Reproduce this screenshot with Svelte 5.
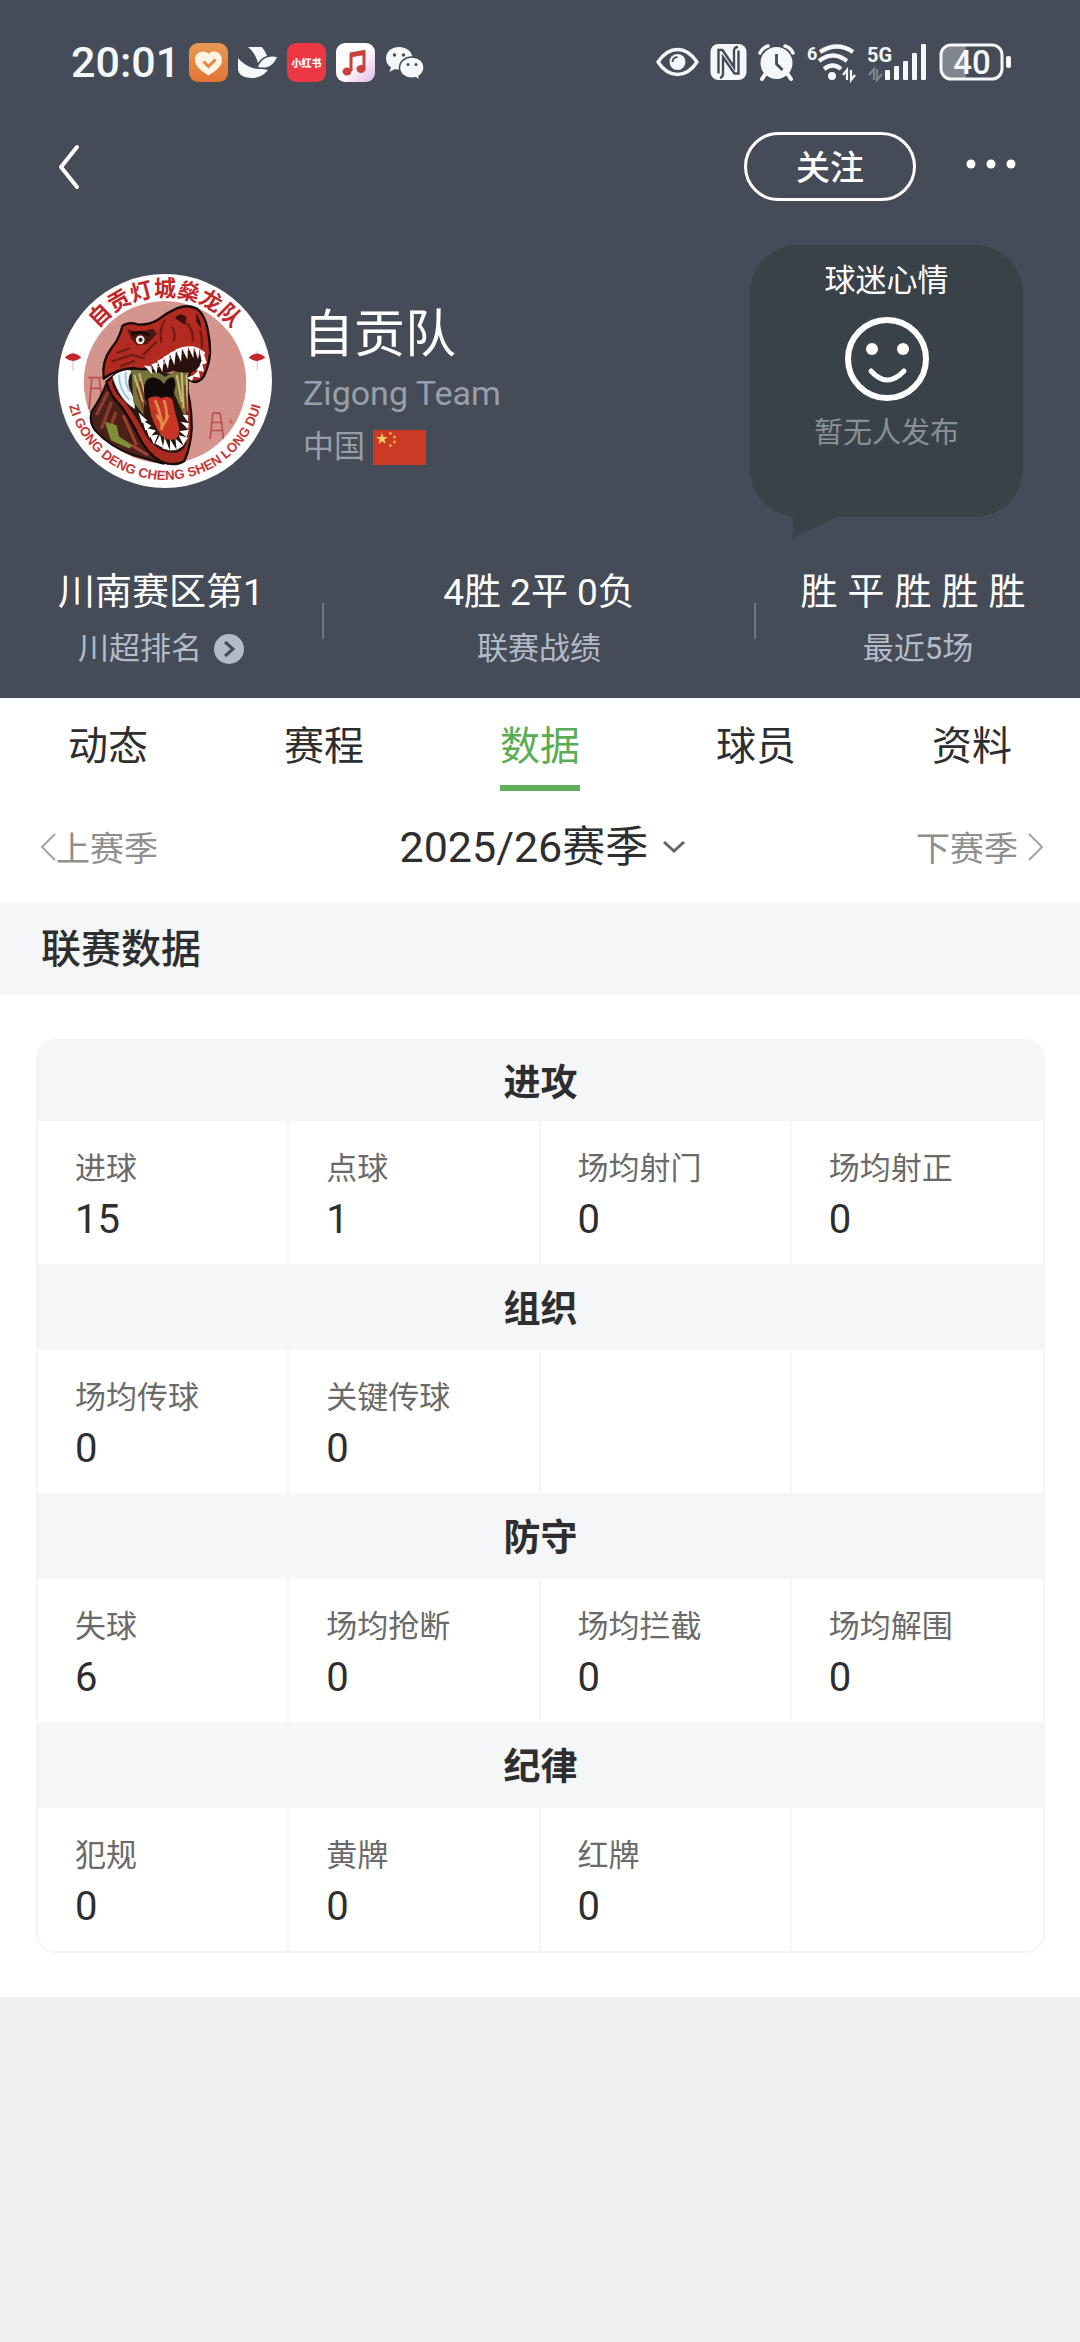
<script lang="ts">
  type Stat = { label: string; value: number };
  type Group = { title: string; stats: Stat[] };

  const tabs = ['动态', '赛程', '数据', '球员', '资料'];
  let active = $state('数据');
  let season = $state('2025/26赛季');

  const recent = ['胜', '平', '胜', '胜', '胜'];

  const groups: Group[] = [
    {
      title: '进攻',
      stats: [
        { label: '进球', value: 15 },
        { label: '点球', value: 1 },
        { label: '场均射门', value: 0 },
        { label: '场均射正', value: 0 }
      ]
    },
    {
      title: '组织',
      stats: [
        { label: '场均传球', value: 0 },
        { label: '关键传球', value: 0 }
      ]
    },
    {
      title: '防守',
      stats: [
        { label: '失球', value: 6 },
        { label: '场均抢断', value: 0 },
        { label: '场均拦截', value: 0 },
        { label: '场均解围', value: 0 }
      ]
    },
    {
      title: '纪律',
      stats: [
        { label: '犯规', value: 0 },
        { label: '黄牌', value: 0 },
        { label: '红牌', value: 0 }
      ]
    }
  ];

  const cols = [0, 1, 2, 3];
</script>

<header class="hero">
  <div class="status">
    <div class="status-left">
      <span class="time">20:01</span>
      <svg width="39" height="39" viewBox="0 0 39 39">
        <defs>
          <linearGradient id="orange" x1="0" y1="0" x2="0" y2="1">
            <stop offset="0" stop-color="#e99a52" />
            <stop offset="1" stop-color="#e27434" />
          </linearGradient>
        </defs>
        <rect width="39" height="39" rx="9" fill="url(#orange)" />
        <path d="M19.500 11C16 6.500 6 8 6 17c0 7 8 12 13.500 15.500C25 29 33 24 33 17c0-9-10-10.500-13.500-6z" fill="#fff3e2" />
        <path d="M14.500 18.500l5 5 7-7" fill="none" stroke="#e38542" stroke-width="3" />
      </svg>
      <svg width="39" height="39" viewBox="0 0 39 39" fill="#f4f8fb">
        <path d="M10 4h14c2 3 4 6 5 9-4 1-7 4-9 7-2-7-5-12-10-16z" />
        <path d="M0 15c6 7 14 11 21 11 3 0 6 0 9 1-4 5-9 8-16 8C5 35 0 31 0 26z" />
        <path d="M39 14c-9-2-16 2-19 10 9 2 15-1 19-10z" />
      </svg>
      <svg width="39" height="39" viewBox="0 0 39 39">
        <rect width="39" height="39" rx="9" fill="#ec3844" />
        <text class="app-name" x="19.500" y="24" text-anchor="middle">小红书</text>
      </svg>
      <svg width="39" height="39" viewBox="0 0 39 39">
        <defs>
          <linearGradient id="music" x1="0" y1="0" x2="1" y2="1">
            <stop offset="0.500" stop-color="#fffdfd" />
            <stop offset="1" stop-color="#e3b6ea" />
          </linearGradient>
        </defs>
        <rect width="39" height="39" rx="9" fill="url(#music)" />
        <path d="M14 11l14-2.500v17M15 11v17M14 13l14-2.500" fill="none" stroke="#c8413c" stroke-width="3" />
        <ellipse cx="11" cy="28.500" rx="4.500" ry="4" fill="#c8413c" />
        <ellipse cx="25" cy="26" rx="4.500" ry="4" fill="#c8413c" />
      </svg>
      <svg width="39" height="39" viewBox="0 0 39 39">
        <path d="M14 4C6 4 1 9 1 15.500c0 4 2 7 5 9L4.500 29l5.500-3c1.300.4 2.700.6 4 .6 7 0 13.500-5 13.500-11.300S22 4 14 4z" fill="#f4f8fb" />
        <path d="M27 14c-7 0-12.500 4.600-12.500 10.700S20 35.300 27 35.300c1.300 0 2.500-.2 3.700-.5l4.500 2.500-1.200-4c2.800-2 5-4.900 5-8.600C39 18.600 34 14 27 14z" fill="#f4f8fb" stroke="#454c57" stroke-width="1.500" />
        <g fill="#454c57">
          <circle cx="9.500" cy="12" r="1.700" />
          <circle cx="18.500" cy="12" r="1.700" />
          <circle cx="23" cy="21.500" r="1.500" />
          <circle cx="31" cy="21.500" r="1.500" />
        </g>
      </svg>
    </div>

    <div class="status-right">
      <svg width="43" height="38" viewBox="0 0 43 38">
        <path d="M2 19C8 10 14 6.500 21.500 6.500S35 10 41 19C35 28 29 31.500 21.500 31.500S8 28 2 19z" fill="none" stroke="#f4f8fb" stroke-width="3.500" stroke-linejoin="round" />
        <circle cx="21.500" cy="19" r="8" fill="#f4f8fb" />
        <path d="M16.500 19a5 5 0 0 1 5-5" fill="none" stroke="#454c57" stroke-width="2" />
      </svg>
      <svg width="37" height="38" viewBox="0 0 37 38">
        <rect x="0.500" y="1" width="36" height="36" rx="8" fill="#f4f8fb" />
        <path d="M8.500 30.500V7h4l11.500 17V8q0-4 4-4M28.500 7.500v23h-4L13 14v17q0 3-3 4" fill="none" stroke="#454c57" stroke-width="2.400" />
      </svg>
      <svg width="37" height="38" viewBox="0 0 37 38">
        <path d="M8 30l-4 6M29 30l4 6" stroke="#f4f8fb" stroke-width="4" stroke-linecap="round" />
        <circle cx="18.500" cy="20" r="16" fill="#f4f8fb" />
        <path d="M2 10a12 12 0 0 1 8-7M35 10a12 12 0 0 0-8-7" fill="none" stroke="#f4f8fb" stroke-width="3.500" stroke-linecap="round" />
        <path d="M18.500 11v10l6 6" fill="none" stroke="#454c57" stroke-width="2.800" />
      </svg>
      <svg width="50" height="38" viewBox="0 0 50 38">
        <text class="tiny" x="1" y="17">6</text>
        <g fill="none" stroke="#f4f8fb" stroke-width="4.200">
          <path d="M14 9q17-11 33 0" />
          <path d="M13 18q14-11 28 0" />
          <path d="M18 26q9-7 17 0" />
        </g>
        <circle cx="26" cy="33" r="4" fill="#f4f8fb" />
        <path d="M37 32l4-5v10M45 27v10l4-5" fill="none" stroke="#f4f8fb" stroke-width="2.200" />
      </svg>
      <svg width="61" height="38" viewBox="0 0 61 38">
        <text class="tiny wide" x="0" y="19">5G</text>
        <path d="M2 32l5-6v11M10 26v11l5-6" fill="none" stroke="#7d838b" stroke-width="2.200" />
        <g fill="#f4f8fb">
          <rect x="18" y="27" width="5" height="10" rx="1" />
          <rect x="27" y="23" width="5" height="14" rx="1" />
          <rect x="36" y="18" width="5" height="19" rx="1" />
          <rect x="45" y="10" width="5" height="27" rx="1" />
          <rect x="54" y="1" width="5" height="36" rx="1" />
        </g>
      </svg>
      <svg width="73" height="38" viewBox="0 0 73 38">
        <path d="M12 3h15v32H12a9 9 0 0 1-9-9V12a9 9 0 0 1 9-9z" fill="#81868d" />
        <rect x="2" y="2" width="61" height="34" rx="10" fill="none" stroke="#f4f8fb" stroke-width="3" />
        <rect x="67" y="13" width="5" height="12" rx="2" fill="#f4f8fb" />
        <text class="charge" x="33" y="31" text-anchor="middle">40</text>
      </svg>
    </div>
  </div>

  <nav class="bar">
    <button class="plain" aria-label="返回">
      <svg width="24" height="48" viewBox="0 0 24 48">
        <path d="M20 4L4 24l16 20" fill="none" stroke="#fff" stroke-width="4" stroke-linecap="round" stroke-linejoin="round" />
      </svg>
    </button>
    <div class="actions">
      <button class="follow">关注</button>
      <button class="plain" aria-label="更多">
        <svg width="52" height="18" viewBox="0 0 52 18" fill="#fff">
          <circle cx="6" cy="6" r="4.500" />
          <circle cx="26" cy="6" r="4.500" />
          <circle cx="46" cy="6" r="4.500" />
        </svg>
      </button>
    </div>
  </nav>

  <div class="profile">
    <svg class="logo" viewBox="55 48 640 640" role="img" aria-label="自贡灯城燊龙队">
      <defs>
        <path id="arc-top" d="M120 370A255 255 0 0 1 630 370" />
        <path id="arc-bottom" d="M79 368A296 296 0 0 0 671 368" />
        <clipPath id="inner"><circle cx="375" cy="372" r="243" /></clipPath>
      </defs>
      <circle cx="375" cy="368" r="320" fill="#fff" />
      <circle cx="375" cy="372" r="243" fill="#d4958f" />
      <g clip-path="url(#inner)" fill="none" stroke="#b9504b" stroke-width="5">
        <path d="M144 358h44M156 362l-8 90M178 362l10 70M150 390h36" />
        <path d="M518 464h22M518 464l-8 78M540 464l10 78M512 492h36M510 516h40" />
        <path d="M566 490h12M572 480v16" opacity="0.500" />
      </g>
      <!-- neck -->
      <path d="M200 375q-15 40-45 85-8 30 10 55 45 50 115 75l90 25 40-15-90-110-70-100z" fill="#4a2019" stroke="#160c0a" stroke-width="6" />
      <path d="M205 400l-35 70M215 430l-30 80M228 460l-20 60" stroke="#8e3a2c" stroke-width="10" />
      <path d="M195 490l35 10 8 35 40 25-10 10-55-25zM235 500l25 35" fill="#7f8f35" />
      <path d="M250 470l40 90M275 560l50 30" stroke="#a0402f" stroke-width="9" />
      <!-- lower jaw -->
      <path d="M200 370q10 40 45 75 30 45 50 85 25 55 70 80 40 15 68-3 18-40 22-97 0-90-25-150L250 330z" fill="#a92a20" stroke="#180b09" stroke-width="7" />
      <path d="M215 370q8 35 40 60 40 55 65 105 30 45 80 48 35 0 42-40l5-190-200-25z" fill="#2a1711" />
      <!-- cheek and throat -->
      <path d="M218 355q30-25 58-18-18 30-5 60 14 25 14 55-48-30-67-97z" fill="#eef6fb" />
      <path d="M238 350q-2 40 30 75M258 340q-5 35 12 60" fill="none" stroke="#9dbfd8" stroke-width="5" />
      <path d="M275 335l60-5 40 25 45-25 25 20-5 140-40-90-85 10-5 60-30-40z" fill="#76733a" />
      <path d="M283 350l25 80M298 345l15 60M425 340l5 110M410 350l15 80M440 350v110" fill="none" stroke="#c8b877" stroke-width="6" />
      <path d="M290 390l22 70M300 370l18 70M434 380l6 90" fill="none" stroke="#8d2c22" stroke-width="5" />
      <path d="M312 395q0-35 25-38 22 2 35 20 12-22 28-20 15 20-5 60l-50-5-30 15z" fill="#120a09" />
      <path d="M325 420q20-12 40 0 20-12 32 5 8 40 20 80 5 35-18 38-28 5-45-28-25-40-29-95z" fill="#c93524" />
      <path d="M345 425q12 25 20 65M372 425q10 30 8 60M350 470l20 30 15-30M365 490v25" fill="none" stroke="#e08a4c" stroke-width="8" />
      <!-- upper jaw -->
      <path d="M248 203q20-14 45-4 35 2 62-15 25-20 55-33 35-14 62 2 22 18 30 58 8 38 8 72-4 38-15 62-8 22-28 26-18 0-22-12 15-45 20-75-50-12-90 20-45 40-95 25-55 5-88 32-8-50 22-90 24-28 34-68z" fill="#b32b20" stroke="#180b09" stroke-width="7" stroke-linejoin="round" />
      <path d="M320 335q50-5 80-42 45-20 90 5-10 40-40 45-30 2-50-5-40 15-80-3z" fill="#2b100d" />
      <path d="M262 212q25 15 75 0l15 15-30 30-30 5-18-20z" fill="#4e1712" />
      <path d="M405 180q15-20 35-2l-5 22zM468 165q15 20 15 45l-14-18z" fill="#3a110d" />
      <path d="M375 185q-20 30-10 70M440 195q20 20 18 55M395 205q15 20 5 45M230 285l40-15M215 310l60-20 40 10M240 325l45-18M350 250l-40 40M480 215q8 30 5 55" fill="none" stroke="#711b15" stroke-width="7" />
      <circle cx="301" cy="245" r="13" fill="#ece8e0" />
      <circle cx="302" cy="245" r="6" fill="#222" />
      <path d="M275 228q30-12 52 4" fill="none" stroke="#180b09" stroke-width="8" />
      <!-- teeth -->
      <path d="M312 322l22 2 3 24zM334 318l20-6-4 34zM352 308l20-10-5 44zM370 296l20-10-6 46zM388 284l20-9-5 46zM406 274l20-7-3 44zM424 267l20-3-2 40zM443 264l18 0-1 36zM461 265l17 5-4 34zM478 272l17 10-10 30zM492 290l8 24-22 8zM486 316l6 24-24-4zM476 336l4 22-24-4zM462 350l-6 18-16-10z" fill="#fff" />
      <path d="M296 462l26 24-16 8zM308 486l26 16-18 14zM318 508l30 8-20 22zM330 532l24-4-12 30zM346 556l14-28 10 40zM368 570l6-32 16 38zM390 576v-34l20 32zM410 574l-4-34 24 22zM430 560l-14-30 28 8zM440 536l-22-18 28-4zM444 512l-22-22 24 4zM444 490l-16-20 16 0z" fill="#fff" />
      <g fill="#c4272b" stroke="#c4272b">
        <path d="M75 298q25-25 50 0-25 20-50 0zM625 298q25-25 50 0-25 20-50 0z" stroke="none" />
        <path d="M100 280v58M651 278v58" stroke-width="2" opacity="0.500" />
      </g>
      <text class="ring-cn" text-anchor="middle">
        <textPath href="#arc-top" startOffset="50%">自贡灯城燊龙队</textPath>
      </text>
      <text class="ring-en" text-anchor="middle">
        <textPath href="#arc-bottom" startOffset="50%">ZI GONG DENG CHENG SHEN LONG DUI</textPath>
      </text>
    </svg>

    <div class="names">
      <h1>自贡队</h1>
      <p class="en">Zigong Team</p>
      <p class="country">
        中国
        <svg width="53" height="35" viewBox="0 0 53 35">
          <rect width="53" height="35" fill="#cb3a24" />
          <path d="M9 3l1.400 4h4.200l-3.300 2.600 1.200 4.200L9 11.300l-3.500 2.500 1.200-4.200L3.400 7h4.200z" fill="#fbd35a" />
          <g fill="#f0a63e">
            <circle cx="17.500" cy="3.500" r="1.400" />
            <circle cx="21.500" cy="7" r="1.400" />
            <circle cx="21.500" cy="12" r="1.400" />
            <circle cx="17.500" cy="15.500" r="1.400" />
          </g>
        </svg>
      </p>
    </div>

    <section class="mood">
      <h2>球迷心情</h2>
      <svg width="84" height="84" viewBox="0 0 84 84">
        <circle cx="42" cy="42" r="39" fill="none" stroke="#fff" stroke-width="6" />
        <circle cx="27" cy="32" r="6" fill="#fff" />
        <circle cx="58" cy="32" r="6" fill="#fff" />
        <path d="M26 54q16 18 33 0" fill="none" stroke="#fff" stroke-width="5" stroke-linecap="round" />
      </svg>
      <p>暂无人发布</p>
    </section>
  </div>

  <div class="summary">
    <div class="item">
      <div class="body">
        <strong>川南赛区第1</strong>
        <a href="#rank">
          川超排名
          <svg width="30" height="30" viewBox="0 0 30 30">
            <circle cx="15" cy="15" r="15" fill="#b4bbc8" />
            <path d="M11 8l8 7-8 7" fill="none" stroke="#454c57" stroke-width="3" />
          </svg>
        </a>
      </div>
    </div>
    <div class="item">
      <div class="body">
        <strong>4胜 2平 0负</strong>
        <span>联赛战绩</span>
      </div>
    </div>
    <div class="item">
      <div class="body">
        <strong class="recent">
          {#each recent as r}<b>{r}</b>{/each}
        </strong>
        <span>最近5场</span>
      </div>
    </div>
  </div>
</header>

<main>
  <div class="tabs" role="tablist">
    {#each tabs as tab (tab)}
      <button role="tab" aria-selected={active === tab} class:active={active === tab} onclick={() => (active = tab)}>
        <span>{tab}</span>
      </button>
    {/each}
  </div>

  <div class="season">
    <button class="step">
      <svg width="16" height="28" viewBox="0 0 16 28">
        <path d="M15 1L2 14l13 13" fill="none" stroke="#a3a3a3" stroke-width="2" />
      </svg>上赛季
    </button>
    <label class="pick">
      <select bind:value={season} aria-label="赛季">
        <option>2025/26赛季</option>
      </select>
      <svg width="22" height="14" viewBox="0 0 22 14">
        <path d="M1 2l10 9 10-9" fill="none" stroke="#666" stroke-width="3" />
      </svg>
    </label>
    <button class="step next">
      下赛季
      <svg width="16" height="28" viewBox="0 0 16 28">
        <path d="M1 1l13 13L1 27" fill="none" stroke="#a3a3a3" stroke-width="2" />
      </svg>
    </button>
  </div>

  <h2 class="heading">联赛数据</h2>

  <div class="panel">
    <table>
      {#each groups as group (group.title)}
        <tbody>
          <tr><th colspan="4" scope="rowgroup">{group.title}</th></tr>
          <tr>
            {#each cols as i}
              <td>
                {#if group.stats[i]}
                  <span class="label">{group.stats[i].label}</span>
                  <span class="value">{group.stats[i].value}</span>
                {/if}
              </td>
            {/each}
          </tr>
        </tbody>
      {/each}
    </table>
  </div>
</main>

<style>
  :global(body) {
    background: #eff0f2;
    font-family: Roboto, 'Noto Sans CJK SC', sans-serif;
    color: #2e2e30;
  }
  h1, h2, p { margin: 0; font-weight: 400; }
  svg { display: block; flex: none; overflow: visible; }
  button {
    font: inherit;
    color: inherit;
    background: none;
    border: 0;
    padding: 0;
  }

  .hero {
    background: #454c57;
    color: #fff;
    padding: 42px 0 21px;
  }
  .status {
    display: flex;
    justify-content: space-between;
    align-items: center;
    height: 40px;
    padding: 0 68px 0 71px;
  }
  .status-left { display: flex; align-items: center; gap: 10px; }
  .status-right { display: flex; align-items: center; gap: 11px; }
  .time {
    width: 108px;
    font-size: 43px;
    font-weight: 500;
    line-height: 44px;
    color: #f4f8fb;
  }
  .app-name { font-size: 10px; font-weight: 900; fill: #fff; }
  .tiny { font-size: 18px; font-weight: 700; fill: #f4f8fb; }
  .tiny.wide { font-size: 20px; }
  .charge { font-size: 33px; font-weight: 500; fill: #f4f8fb; }

  .bar {
    display: flex;
    justify-content: space-between;
    align-items: center;
    margin-top: 50px;
    padding: 0 63px 0 57px;
  }
  .actions { display: flex; align-items: center; gap: 49px; }
  .follow {
    width: 172px;
    height: 69px;
    border: 3px solid #fff;
    border-radius: 35px;
    font-size: 34px;
    font-weight: 500;
    line-height: 66px;
  }

  .profile {
    display: flex;
    align-items: center;
    margin-top: 44px;
    padding: 0 57px 0 58px;
  }
  .logo { width: 214px; height: 214px; }
  .ring-cn { font-size: 66px; font-weight: 700; fill: #c4272b; }
  .ring-en {
    font-family: 'Liberation Sans', Arial, sans-serif;
    font-size: 40px;
    font-weight: 700;
    fill: #c4383a;
  }
  .names { flex: 1; padding: 16px 0 0 31px; }
  h1 { font-size: 51px; line-height: 64px; }
  .en { font-size: 34px; line-height: 52px; color: #989fab; }
  .country {
    display: flex;
    align-items: center;
    gap: 8px;
    font-size: 31px;
    line-height: 56px;
    color: #989fab;
  }
  .mood {
    position: relative;
    display: flex;
    flex-direction: column;
    align-items: center;
    box-sizing: border-box;
    width: 273px;
    height: 272px;
    padding-top: 14px;
    border-radius: 48px;
    background: #394249;
  }
  .mood::after {
    content: '';
    position: absolute;
    left: 43px;
    top: 100%;
    width: 44px;
    height: 21px;
    background: #394249;
    clip-path: polygon(0 0, 100% 0, 0 100%);
  }
  .mood h2 { font-size: 31px; line-height: 44px; margin-bottom: 14px; }
  .mood p { font-size: 29px; line-height: 44px; margin-top: 10px; color: #8a9096; }

  .summary {
    display: grid;
    grid-template-columns: 3fr 4fr 3fr;
    margin-top: 48px;
  }
  .item { display: flex; align-items: center; }
  .item:not(:last-child)::after {
    content: '';
    width: 2px;
    height: 36px;
    background: #6f7681;
  }
  .body {
    flex: 1;
    display: flex;
    flex-direction: column;
    align-items: center;
    line-height: 56px;
  }
  .body strong { font-size: 37px; font-weight: 400; white-space: nowrap; }
  .body span, .body a {
    display: flex;
    align-items: center;
    gap: 12px;
    font-size: 31px;
    color: #b4bbc8;
    text-decoration: none;
  }
  .recent { display: flex; }
  .recent b { font-weight: 400; margin-right: 10px; }

  main { background: #fff; }
  .tabs { display: grid; grid-template-columns: repeat(5, 1fr); }
  .tabs span {
    display: inline-block;
    padding-top: 10px;
    font-size: 40px;
    line-height: 77px;
    border-bottom: 6px solid transparent;
  }
  .tabs .active span { color: #5aad55; border-color: #60ac58; }

  .season {
    display: grid;
    grid-template-columns: 1fr auto 1fr;
    align-items: center;
    height: 111px;
    padding: 0 36px 0 40px;
  }
  .step {
    display: flex;
    align-items: center;
    font-size: 34px;
    color: #8f8f8f;
  }
  .next { justify-content: flex-end; gap: 10px; }
  .pick { display: flex; align-items: center; gap: 14px; }
  select {
    appearance: none;
    border: 0;
    padding: 0;
    background: none;
    font: inherit;
    font-size: 43px;
    color: inherit;
  }

  .heading {
    padding: 3px 0 0 41px;
    font-size: 40px;
    font-weight: 500;
    line-height: 90px;
    background: #f4f6f7;
  }

  .panel { padding: 44px 35px 44px 36px; }
  table {
    width: 100%;
    table-layout: fixed;
    border: 2px solid #f4f5f6;
    border-radius: 20px;
    border-spacing: 0;
    overflow: hidden;
  }
  th {
    box-sizing: border-box;
    height: 86px;
    padding: 6px 0 0;
    font-size: 37px;
    font-weight: 700;
    line-height: 60px;
    background: #f4f6f7;
  }
  tbody:first-child th { height: 80px; }
  td {
    height: 143px;
    box-sizing: border-box;
    padding: 24px 0 0 37px;
    vertical-align: top;
    border-right: 2px solid #f4f5f6;
  }
  td:last-child { border-right: 0; }
  .label, .value { display: block; }
  .label { font-size: 31px; line-height: 48px; color: #6a6a6a; }
  .value { font-size: 40px; line-height: 54px; }
</style>
